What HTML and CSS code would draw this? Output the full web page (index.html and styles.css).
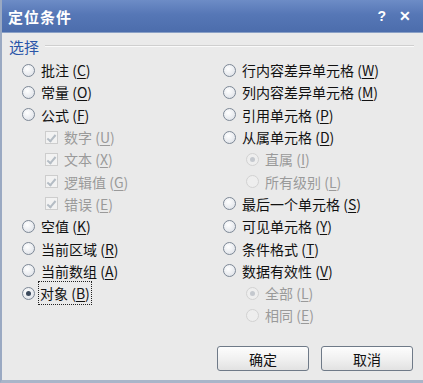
FILE: index.html
```html
<!DOCTYPE html>
<html>
<head>
    <title>定位条件</title>
    <link rel="stylesheet" href="styles.css">
</head>
<body>
    <div class="dialog">
        <div class="titlebar">
            <span class="title">定位条件</span>
            <span class="title-btns"><span class="help">?</span><span class="close">✕</span></span>
        </div>

        <div class="content">
            <div class="group-head">
                <span class="group-label">选择</span>
                <span class="group-line"></span>
            </div>

            <div class="columns">
                <div class="col col-left">
                    <div class="row"><span class="radio"></span><span class="label">批注 (<u>C</u>)</span></div>
                    <div class="row"><span class="radio"></span><span class="label">常量 (<u>O</u>)</span></div>
                    <div class="row"><span class="radio"></span><span class="label">公式 (<u>F</u>)</span></div>
                    <div class="row sub disabled"><span class="check"></span><span class="label">数字 (<u>U</u>)</span></div>
                    <div class="row sub disabled"><span class="check"></span><span class="label">文本 (<u>X</u>)</span></div>
                    <div class="row sub disabled"><span class="check"></span><span class="label">逻辑值 (<u>G</u>)</span></div>
                    <div class="row sub disabled"><span class="check"></span><span class="label">错误 (<u>E</u>)</span></div>
                    <div class="row"><span class="radio"></span><span class="label">空值 (<u>K</u>)</span></div>
                    <div class="row"><span class="radio"></span><span class="label">当前区域 (<u>R</u>)</span></div>
                    <div class="row"><span class="radio"></span><span class="label">当前数组 (<u>A</u>)</span></div>
                    <div class="row"><span class="radio checked"></span><span class="label focus">对象 (<u>B</u>)</span></div>
                </div>

                <div class="col col-right">
                    <div class="row"><span class="radio"></span><span class="label">行内容差异单元格 (<u>W</u>)</span></div>
                    <div class="row"><span class="radio"></span><span class="label">列内容差异单元格 (<u>M</u>)</span></div>
                    <div class="row"><span class="radio"></span><span class="label">引用单元格 (<u>P</u>)</span></div>
                    <div class="row"><span class="radio"></span><span class="label">从属单元格 (<u>D</u>)</span></div>
                    <div class="row sub disabled"><span class="radio checked"></span><span class="label">直属 (<u>I</u>)</span></div>
                    <div class="row sub disabled"><span class="radio"></span><span class="label">所有级别 (<u>L</u>)</span></div>
                    <div class="row"><span class="radio"></span><span class="label">最后一个单元格 (<u>S</u>)</span></div>
                    <div class="row"><span class="radio"></span><span class="label">可见单元格 (<u>Y</u>)</span></div>
                    <div class="row"><span class="radio"></span><span class="label">条件格式 (<u>T</u>)</span></div>
                    <div class="row"><span class="radio"></span><span class="label">数据有效性 (<u>V</u>)</span></div>
                    <div class="row sub disabled"><span class="radio checked"></span><span class="label">全部 (<u>L</u>)</span></div>
                    <div class="row sub disabled"><span class="radio"></span><span class="label">相同 (<u>E</u>)</span></div>
                </div>
            </div>

            <div class="buttons">
                <button class="btn">确定</button>
                <button class="btn">取消</button>
            </div>
        </div>
    </div>
</body>
</html>
```

FILE: styles.css
```css
body {
    margin: 0;
    padding: 0;
    font-family: "Noto Sans CJK SC", "Liberation Sans", sans-serif;
    background-color: #ebebeb;
}

.dialog {
    width: 423px;
    height: 383px;
    box-sizing: border-box;
    background-color: #eaeaea;
    border-left: 2px solid #9aa9c2;
    border-bottom: 3px solid #a9b5c9;
    display: flex;
    flex-direction: column;
    overflow: hidden;
}

.titlebar {
    height: 32px;
    flex: none;
    display: flex;
    align-items: center;
    justify-content: space-between;
    padding: 0 12px 0 6px;
    background: linear-gradient(#6d8cc6, #5677b6 45%, #4c6dac);
    border-bottom: 1px solid #8aa0c6;
    color: #fff;
}

.title {
    font-size: 15px;
    font-weight: bold;
    letter-spacing: 1px;
}

.title-btns {
    display: flex;
    gap: 13px;
    font-family: "Liberation Sans", sans-serif;
    font-weight: bold;
    font-size: 14px;
}

.content {
    flex: 1;
    display: flex;
    flex-direction: column;
}

.group-head {
    display: flex;
    align-items: center;
    height: 26px;
    padding: 0 9px 0 7px;
}

.group-label {
    color: #2a55a8;
    font-size: 15px;
    margin-right: 6px;
}

.group-line {
    flex: 1;
    border-top: 1px solid #cfcfcf;
    border-bottom: 1px solid #fafafa;
}

.columns {
    display: grid;
    grid-template-columns: 201px 1fr;
    padding-left: 20px;
}

.row {
    height: 22.3px;
    display: flex;
    align-items: center;
    font-size: 14px;
    color: #111;
}

.row.sub {
    padding-left: 23px;
}

.disabled {
    color: #9a9a9a;
}

.label {
    margin-left: 6px;
    white-space: nowrap;
}

.label u {
    text-underline-offset: 2px;
}

.focus {
    outline: 1px dotted #222;
    outline-offset: 1px;
    margin-left: 5px;
}

.radio {
    width: 13px;
    height: 13px;
    flex: none;
    box-sizing: border-box;
    border-radius: 50%;
    border: 1px solid #7d8896;
    background: radial-gradient(circle at 40% 35%, #ffffff, #e4e7ec 70%, #cfd4db);
    display: flex;
    align-items: center;
    justify-content: center;
}

.radio.checked::after {
    content: "";
    width: 5px;
    height: 5px;
    border-radius: 50%;
    background-color: #3c4a5c;
}

.disabled .radio {
    border-color: #d2d2d2;
    background: #eeeeee;
}

.disabled .radio.checked::after {
    background-color: #c4c8ce;
}

.check {
    width: 13px;
    height: 13px;
    flex: none;
    box-sizing: border-box;
    border: 1px solid #cdcdcd;
    background-color: #f2f2f2;
    position: relative;
}

.check::after {
    content: "";
    position: absolute;
    left: 3px;
    top: 1px;
    width: 3px;
    height: 7px;
    border-right: 2px solid #b4bcc4;
    border-bottom: 2px solid #b4bcc4;
    transform: rotate(40deg);
}

.buttons {
    margin-top: auto;
    display: flex;
    justify-content: flex-end;
    gap: 12px;
    padding: 0 10px 9px 0;
}

.btn {
    width: 92px;
    height: 25px;
    font-family: inherit;
    font-size: 14px;
    color: #111;
    border: 1px solid #6f7a88;
    border-radius: 3px;
    background: linear-gradient(#fdfdfd, #f1f1f1 50%, #e2e2e2);
    padding: 0;
}
```
